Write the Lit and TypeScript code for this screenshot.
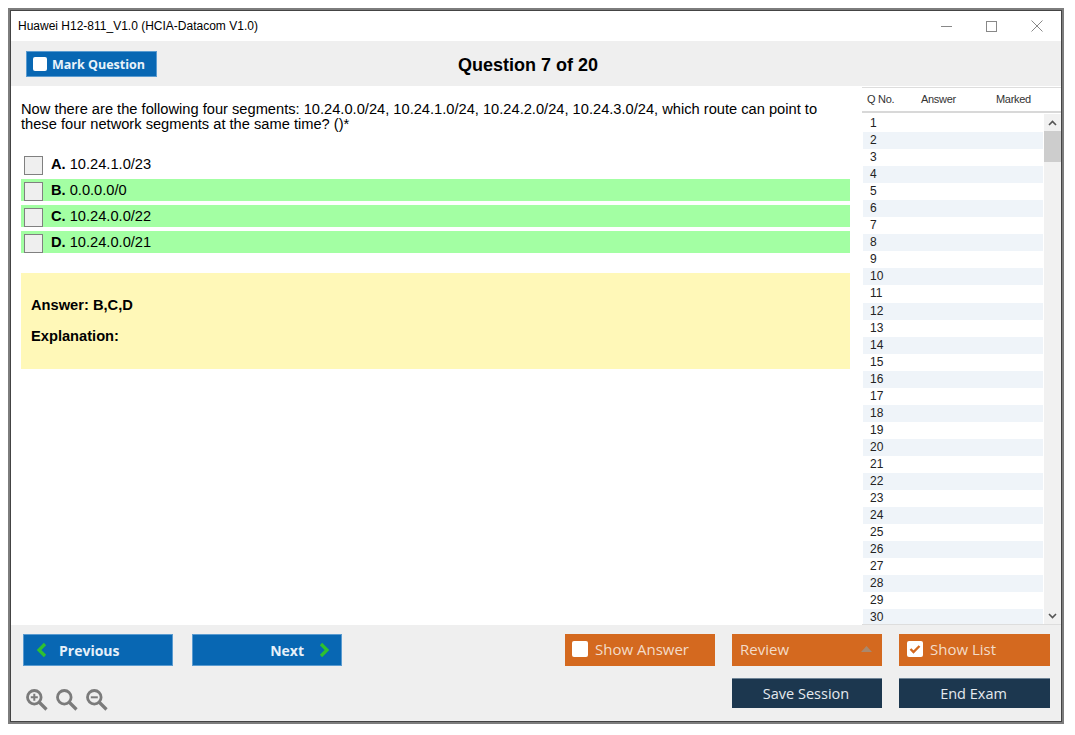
import { LitElement, css, html, svg } from "lit";
import { customElement } from "lit/decorators.js";

const OPTIONS = [
  { key: "A.", text: "10.24.1.0/23", right: false },
  { key: "B.", text: "0.0.0.0/0", right: true },
  { key: "C.", text: "10.24.0.0/22", right: true },
  { key: "D.", text: "10.24.0.0/21", right: true },
];

const ROWS = Array.from({ length: 30 }, (_, i) => i + 1);

const zoomIcon = (inner: unknown) => html`<svg class="zoom" viewBox="0 0 22 22" width="22" height="22">
  <circle cx="8.3" cy="8.3" r="6.8" fill="none" stroke="#7b7b7b" stroke-width="2.8"></circle>
  <path d="M13 13l7.5 7.5" stroke="#7b7b7b" stroke-width="3.2" fill="none"></path>
  ${inner}
</svg>`;

@customElement("app-root")
export class AppRoot extends LitElement {
  static styles = css`
    :host {
      display: block;
      width: 1075px;
      height: 735px;
      box-sizing: border-box;
      padding: 8px 11px 11px 8px;
      background: #fff;
      font-family: "Liberation Sans", Arial, sans-serif;
      color: #000;
      overflow: hidden;
    }
    .window {
      height: 100%;
      box-sizing: border-box;
      border: 3px solid #7d7d7d;
      outline: 1px solid #444;
      outline-offset: -3px;
      display: flex;
      flex-direction: column;
      background: #fff;
    }
    .titlebar {
      height: 30px;
      flex: none;
      display: flex;
      align-items: center;
      justify-content: space-between;
      padding-left: 7px;
      font-size: 12px;
    }
    .controls {
      display: flex;
      align-items: center;
      gap: 34px;
      padding-right: 18px;
    }
    .controls svg {
      display: block;
    }
    .toolbar {
      height: 45px;
      flex: none;
      background: #efefef;
      display: grid;
      grid-template-columns: 1fr auto 1fr;
      align-items: center;
      padding: 0 15px;
    }
    .mark {
      justify-self: start;
      width: 131px;
      height: 26px;
      box-sizing: border-box;
      background: #0867b3;
      border: 1px solid #5a9bd0;
      color: #eaf3fa;
      display: flex;
      align-items: center;
      gap: 5px;
      padding-left: 6px;
      font: 700 12.5px "Open Sans", sans-serif;
      margin-top: 1px;
    }
    .tick {
      width: 14px;
      height: 14px;
      background: #fff;
      border-radius: 2px;
      flex: none;
      display: block;
    }
    .title {
      font-size: 18px;
      font-weight: 700;
      margin-top: 3px;
      padding-right: 16px;
    }
    .body {
      flex: 1;
      min-height: 0;
      display: flex;
    }
    .main {
      flex: 1;
      min-width: 0;
      padding: 16px 12px 0 10px;
    }
    .question {
      margin: 0;
      font-size: 14.67px;
      line-height: 15px;
    }
    .options {
      margin-top: 21px;
      display: flex;
      flex-direction: column;
      gap: 4px;
    }
    .option {
      height: 22px;
      display: flex;
      align-items: center;
      font-size: 14.67px;
    }
    .option.right {
      background: #a3ffa3;
    }
    .box {
      width: 17px;
      height: 17px;
      margin-left: 3px;
      margin-top: 3px;
      border: 1px solid #808080;
      background: #efefef;
      flex: none;
      margin-right: 8px;
      box-sizing: content-box;
    }
    .option b {
      margin-right: 4px;
    }
    .answer {
      margin-top: 20px;
      height: 96px;
      box-sizing: border-box;
      background: #fff8b8;
      padding: 24px 10px 0;
      font-size: 14.67px;
      font-weight: 700;
    }
    .answer div {
      height: 17px;
      line-height: 17px;
      margin-bottom: 14px;
    }
    .side {
      width: 199px;
      flex: none;
      display: flex;
      flex-direction: column;
      font-size: 12px;
      border-bottom: 1px solid #ddd;
      box-sizing: border-box;
    }
    .side-head {
      flex: none;
      height: 26px;
      margin-top: 1px;
      box-sizing: border-box;
      border-top: 1px solid #ddd;
      border-bottom: 2px solid #d8d8d8;
      display: grid;
      grid-template-columns: 54px 75px 1fr;
      align-items: center;
      padding: 0 0 2px 5px;
      font-size: 11px;
      color: #333;
      letter-spacing: -0.3px;
    }
    .side-body {
      flex: 1;
      min-height: 0;
      display: flex;
      overflow: hidden;
      padding-top: 2px;
    }
    .rows {
      flex: 1;
      min-width: 0;
      overflow: hidden;
      padding-left: 1px;
    }
    .row {
      height: 17.05px;
      line-height: 17px;
      padding-left: 7px;
      color: #222;
    }
    .row.alt {
      background: #eff4f9;
    }
    .scroll {
      width: 17px;
      flex: none;
      background: #f1f1f1;
      display: flex;
      flex-direction: column;
      align-items: center;
      margin-left: 1px;
      margin-top: -1px;
    }
    .scroll svg {
      display: block;
      flex: none;
    }
    .arrow-up {
      height: 17px;
      display: flex;
      align-items: center;
    }
    .thumb {
      width: 100%;
      height: 31px;
      background: #cdcdcd;
      flex: none;
    }
    .spacer {
      flex: 1;
    }
    .arrow-down {
      height: 17px;
      display: flex;
      align-items: center;
    }
    .footer {
      height: 96px;
      flex: none;
      background: #efefef;
      display: grid;
      grid-template-columns: 150px 150px 1fr 150px 150px 151px;
      grid-template-rows: 32px 30px;
      column-gap: 17px;
      row-gap: 12px;
      padding: 9px 11px 0 12px;
      box-sizing: border-box;
    }
    .btn {
      box-sizing: border-box;
      font: 400 15px "Open Sans", sans-serif;
      display: flex;
      align-items: center;
      color: #f3dcc9;
    }
    .nav {
      background: #0867b3;
      border: 1px solid #5a9bd0;
      color: #e6f0f9;
      font-weight: 700;
      font-size: 14px;
      padding: 0 12px;
      gap: 12px;
    }
    .nav.next {
      justify-content: flex-end;
      margin-left: 2px;
      margin-right: -2px;
      padding-right: 11px;
      gap: 15px;
    }
    .orange {
      background: #d4691f;
      padding: 0 7px 2px;
      gap: 7px;
    }
    .orange.review {
      justify-content: space-between;
      padding-left: 8px;
      padding-right: 10px;
    }
    .orange.list {
      padding-left: 8px;
    }
    .dark {
      background: #1c374f;
      color: #e4e9ee;
      justify-content: center;
      border-top: 1px solid #6f8496;
      font-size: 14.5px;
      padding-right: 2px;
    }
    .check {
      width: 16px;
      height: 16px;
      border-radius: 2px;
      background: #fff;
      flex: none;
      display: block;
    }
    .show-answer {
      grid-column: 4;
    }
    .zooms {
      grid-column: 1;
      grid-row: 2;
      display: flex;
      align-items: flex-start;
      gap: 8px;
      padding: 11px 0 0 3px;
    }
    .zoom {
      display: block;
      flex: none;
    }
    .save {
      grid-column: 5;
      grid-row: 2;
    }
    .end {
      grid-column: 6;
      grid-row: 2;
    }
  `;

  render() {
    return html`
      <div class="window">
        <div class="titlebar">
          <span>Huawei H12-811_V1.0 (HCIA-Datacom V1.0)</span>
          <div class="controls">
            <svg width="11" height="11" viewBox="0 0 11 11"><path d="M0 5.5h11" stroke="#888"></path></svg>
            <svg width="11" height="11" viewBox="0 0 11 11"><rect x=".5" y=".5" width="10" height="10" fill="none" stroke="#888"></rect></svg>
            <svg width="12" height="12" viewBox="0 0 12 12"><path d="M.5.5l11 11M11.5.5l-11 11" stroke="#888"></path></svg>
          </div>
        </div>
        <div class="toolbar">
          <div class="mark"><span class="tick"></span>Mark Question</div>
          <div class="title">Question 7 of 20</div>
        </div>
        <div class="body">
          <div class="main">
            <p class="question">
              Now there are the following four segments: 10.24.0.0/24, 10.24.1.0/24, 10.24.2.0/24, 10.24.3.0/24, which route can point to these four network segments at the same time? ()*
            </p>
            <div class="options">
              ${OPTIONS.map(
                (o) => html`<div class="option ${o.right ? "right" : ""}">
                  <span class="box"></span><b>${o.key}</b><span>${o.text}</span>
                </div>`
              )}
            </div>
            <div class="answer">
              <div>Answer: B,C,D</div>
              <div>Explanation:</div>
            </div>
          </div>
          <div class="side">
            <div class="side-head"><span>Q No.</span><span>Answer</span><span>Marked</span></div>
            <div class="side-body">
              <div class="rows">
                ${ROWS.map((n) => html`<div class="row ${n % 2 === 0 ? "alt" : ""}">${n}</div>`)}
              </div>
              <div class="scroll">
                <div class="arrow-up">
                  <svg width="9" height="6" viewBox="0 0 9 6"><path d="M1 5l3.5-3.5L8 5" fill="none" stroke="#555" stroke-width="1.6"></path></svg>
                </div>
                <div class="thumb"></div>
                <div class="spacer"></div>
                <div class="arrow-down">
                  <svg width="9" height="6" viewBox="0 0 9 6"><path d="M1 1l3.5 3.5L8 1" fill="none" stroke="#555" stroke-width="1.6"></path></svg>
                </div>
              </div>
            </div>
          </div>
        </div>
        <div class="footer">
          <div class="btn nav">
            <svg width="11" height="16" viewBox="0 0 11 16"><path d="M9 2L3 8l6 6" fill="none" stroke="#2fc12f" stroke-width="3.2"></path></svg>
            Previous
          </div>
          <div class="btn nav next">
            Next
            <svg width="11" height="16" viewBox="0 0 11 16"><path d="M2 2l6 6-6 6" fill="none" stroke="#2fc12f" stroke-width="3.2"></path></svg>
          </div>
          <div class="btn orange show-answer"><span class="check"></span>Show Answer</div>
          <div class="btn orange review">
            Review
            <svg width="11" height="6" viewBox="0 0 11 6"><path d="M5.5 0L11 6H0z" fill="#a9886d"></path></svg>
          </div>
          <div class="btn orange list">
            <svg class="check" viewBox="0 0 16 16"><path d="M3.5 8l3 3 6-6" fill="none" stroke="#d4691f" stroke-width="2.4"></path></svg>
            Show List
          </div>
          <div class="zooms">
            ${zoomIcon(svg`<path d="M4.8 8.3h7M8.3 4.8v7" stroke="#7b7b7b" stroke-width="2"></path>`)}
            ${zoomIcon(svg``)}
            ${zoomIcon(svg`<path d="M4.8 8.3h7" stroke="#7b7b7b" stroke-width="2"></path>`)}
          </div>
          <div class="btn dark save">Save Session</div>
          <div class="btn dark end">End Exam</div>
        </div>
      </div>
    `;
  }
}
